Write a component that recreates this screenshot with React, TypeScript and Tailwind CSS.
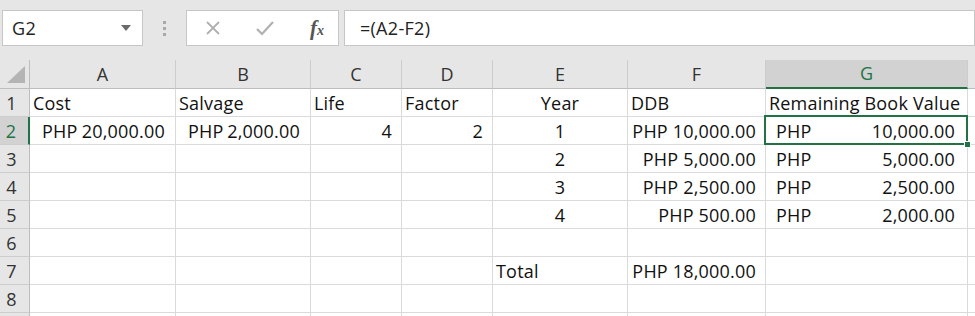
import React from 'react'

type Align = 'left' | 'right' | 'center' | 'acct'

interface CellData {
  text?: string
  num?: string
  align?: Align
  pad?: string
}

const COLS = ['A', 'B', 'C', 'D', 'E', 'F', 'G', '']

const rows: CellData[][] = [
  [
    { text: 'Cost' },
    { text: 'Salvage' },
    { text: 'Life' },
    { text: 'Factor' },
    { text: 'Year', align: 'center' },
    { text: 'DDB' },
    { text: 'Remaining Book Value' },
    {},
  ],
  [
    { text: 'PHP', num: '20,000.00', align: 'acct', pad: 'pl-[12px] pr-[10px]' },
    { text: 'PHP', num: '2,000.00', align: 'acct', pad: 'pl-[12px] pr-[10px]' },
    { text: '4', align: 'right' },
    { text: '2', align: 'right' },
    { text: '1', align: 'center' },
    { text: 'PHP 10,000.00', align: 'right' },
    { text: 'PHP', num: '10,000.00', align: 'acct' },
    {},
  ],
  [
    {}, {}, {}, {},
    { text: '2', align: 'center' },
    { text: 'PHP 5,000.00', align: 'right' },
    { text: 'PHP', num: '5,000.00', align: 'acct' },
    {},
  ],
  [
    {}, {}, {}, {},
    { text: '3', align: 'center' },
    { text: 'PHP 2,500.00', align: 'right' },
    { text: 'PHP', num: '2,500.00', align: 'acct' },
    {},
  ],
  [
    {}, {}, {}, {},
    { text: '4', align: 'center' },
    { text: 'PHP 500.00', align: 'right' },
    { text: 'PHP', num: '2,000.00', align: 'acct' },
    {},
  ],
  [{}, {}, {}, {}, {}, {}, {}, {}],
  [
    {}, {}, {}, {},
    { text: 'Total' },
    { text: 'PHP 18,000.00', align: 'right' },
    {},
    {},
  ],
  [{}, {}, {}, {}, {}, {}, {}, {}],
  [{}, {}, {}, {}, {}, {}, {}, {}],
]

function Cell({ cell, selected }: { cell: CellData; selected?: boolean }) {
  const align = cell.align ?? 'left'
  return (
    <div
      className={
        'relative h-[28px] bg-white border-r border-b border-[#dadada] flex items-end pb-[2px] whitespace-pre text-[18px] leading-[22px] tracking-[0.2px] text-[#111] ' +
        (align === 'right'
          ? 'justify-end pr-[9px]'
          : align === 'center'
          ? 'justify-center'
          : align === 'acct'
          ? 'justify-between ' + (cell.pad ?? 'pl-[10px] pr-[12px]')
          : 'pl-[3px]')
      }
    >
      {align === 'acct' ? (
        <>
          <span>{cell.text}</span>
          <span>{cell.num}</span>
        </>
      ) : (
        <span>{cell.text}</span>
      )}
      {selected && (
        <div className="absolute -left-[2px] -top-[2px] right-[-1px] bottom-[-1px] border-2 border-[#217346] z-10 pointer-events-none">
          <div className="absolute -right-[5px] -bottom-[5px] w-[7px] h-[7px] bg-[#217346] border border-white" />
        </div>
      )}
    </div>
  )
}

export default function App() {
  return (
    <div className="w-[975px] h-[316px] overflow-hidden bg-[#e6e6e6] font-['Open_Sans',sans-serif]">
      {/* Formula bar */}
      <div className="h-[60px] flex items-start pt-[10px] pl-[2px]">
        <div className="w-[143px] h-[36px] bg-white border border-[#c6c6c6] flex items-center justify-between pl-[9px] pr-[11px] text-[18px] tracking-[0.3px] text-[#222]">
          <span>G2</span>
          <svg width="10" height="6" viewBox="0 0 10 6">
            <path d="M0 0 L10 0 L5 6 Z" fill="#6b6b6b" />
          </svg>
        </div>
        <div className="w-[43px] h-[36px] flex flex-col items-center justify-center gap-[3px]">
          <span className="w-[3px] h-[3px] bg-[#a8a8a8]" />
          <span className="w-[3px] h-[3px] bg-[#a8a8a8]" />
          <span className="w-[3px] h-[3px] bg-[#a8a8a8]" />
        </div>
        <div className="w-[155px] h-[36px] bg-white border border-[#c6c6c6] flex items-center pl-[18px] pr-[14px] justify-between">
          <svg width="16" height="16" viewBox="0 0 16 16">
            <path d="M2 2 L14 14 M14 2 L2 14" stroke="#b0b0b0" strokeWidth="1.8" />
          </svg>
          <svg width="20" height="16" viewBox="0 0 20 16">
            <path d="M2 9 L7 14 L18 2" stroke="#b0b0b0" strokeWidth="2.2" fill="none" />
          </svg>
          <span className="font-['Liberation_Serif',serif] italic font-bold text-[21px] text-[#555] leading-none">
            f<span className="text-[14px]">x</span>
          </span>
        </div>
        <div className="ml-[5px] w-[640px] h-[36px] bg-white border border-[#c6c6c6] flex items-center pl-[15px] text-[18px] tracking-[0.3px] text-[#222]">
          =(A2-F2)
        </div>
      </div>

      {/* Grid */}
      <div className="grid grid-cols-[30px_146px_135px_91px_91px_135px_138px_202px_60px]">
        {/* corner */}
        <div className="h-[29px] border-r border-b border-[#bdbdbd] flex items-end justify-end pr-[4px] pb-[5px]">
          <svg width="18" height="17" viewBox="0 0 18 17">
            <path d="M18 0 L18 17 L0 17 Z" fill="#b4b4b4" />
          </svg>
        </div>
        {COLS.map((c, k) => (
          <div
            key={k}
            className={
              'h-[29px] flex items-center justify-center text-[18px] border-r border-[#cdcdcd] ' +
              (c === 'G'
                ? 'bg-[#d2d2d2] text-[#217346] border-b-2 border-b-[#217346]'
                : 'text-[#333] border-b border-b-[#bdbdbd]')
            }
          >
            {c}
          </div>
        ))}

        {rows.map((row, i) => (
          <React.Fragment key={i}>
            <div
              className={
                'h-[28px] flex items-end justify-center pr-[6px] pb-[2px] text-[18px] leading-[22px] border-b border-[#cdcdcd] ' +
                (i === 1
                  ? 'bg-[#d2d2d2] text-[#217346] border-r-2 border-r-[#217346]'
                  : 'text-[#333] border-r border-r-[#bdbdbd]')
              }
            >
              {i < 8 ? i + 1 : ''}
            </div>
            {row.map((cell, j) => (
              <Cell key={j} cell={cell} selected={i === 1 && j === 6} />
            ))}
          </React.Fragment>
        ))}
      </div>
    </div>
  )
}
